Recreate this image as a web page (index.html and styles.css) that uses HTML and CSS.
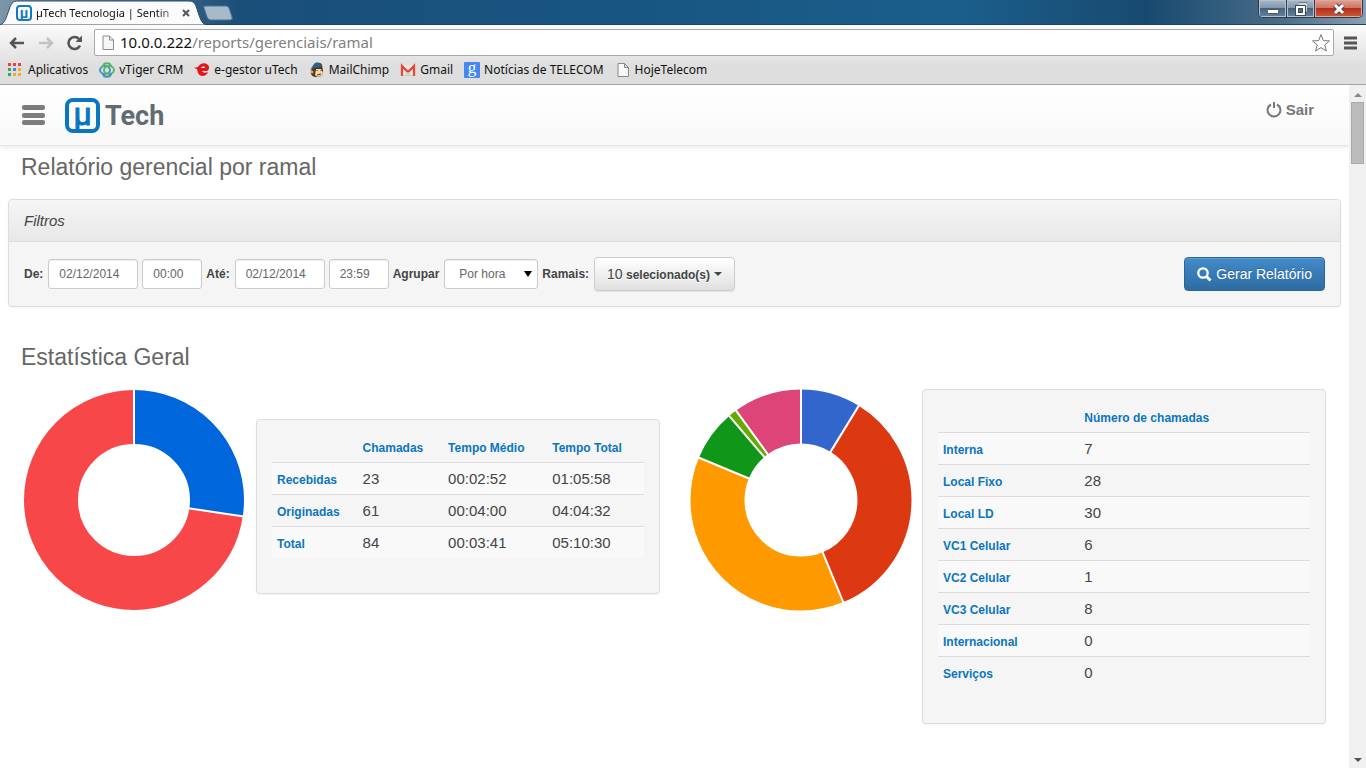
FILE: index.html
```html
<!DOCTYPE html>
<html lang="pt-BR">
<head>
<meta charset="utf-8">
<title>µTech Tecnologia | Sentinela</title>
<link rel="stylesheet" href="styles.css">
</head>
<body>
<div class="window">
  <div class="titlebar">
    <div class="tab">
      <svg class="tab-shape" viewBox="0 0 206 25" preserveAspectRatio="none" aria-hidden="true"><path d="M0 25 C5 23 6 18 9 10 C11 3 13 1 18 1 H188 C194 1 195 3 197 9 C200 18 201 23 206 25 Z" fill="#fbfbfb" stroke="#2d4d66" stroke-width="1"/></svg>
      <span class="favicon">µ</span>
      <span class="tab-title">µTech Tecnologia | Sentin</span>
      <button class="tab-close" type="button" aria-label="Fechar guia"><svg width="8" height="8" viewBox="0 0 8 8"><path d="M1 1 L7 7 M7 1 L1 7" stroke="#555" stroke-width="2"/></svg></button>
    </div>
    <button class="new-tab" type="button" aria-label="Nova guia"><svg width="32" height="16" viewBox="0 0 32 16"><path d="M3 1 H24 Q26 1 27 3 L30 12 Q31 15 28 15 H9 Q6 15 5 12 L2 3 Q1 1 3 1 Z" fill="#a6bac9" stroke="#4d7391"/></svg></button>
    <div class="window-controls">
      <button type="button" aria-label="Minimizar"><svg width="12" height="14" viewBox="0 0 12 14"><rect x="0.5" y="7.500" width="11" height="4" rx="1" fill="#fff" stroke="#4a5562"/></svg></button>
      <button type="button" aria-label="Restaurar"><svg width="12" height="14" viewBox="0 0 12 14"><path d="M4 2 H11 V9 H9" fill="none" stroke="#3f4b59" stroke-width="3"/><path d="M4 2 H11 V9 H9" fill="none" stroke="#fff" stroke-width="1.500"/><rect x="2" y="5" width="7" height="7" fill="none" stroke="#3f4b59" stroke-width="4"/><rect x="2" y="5" width="7" height="7" fill="none" stroke="#fff" stroke-width="2"/></svg></button>
      <button class="win-close" type="button" aria-label="Fechar"><svg width="14" height="14" viewBox="0 0 14 14"><path d="M3 3 L11 11 M11 3 L3 11" stroke="#5b4048" stroke-width="5"/><path d="M3 3 L11 11 M11 3 L3 11" stroke="#fff" stroke-width="3"/></svg></button>
    </div>
  </div>

  <div class="chrome">
    <div class="toolbar">
      <button type="button" aria-label="Voltar"><svg width="16" height="14" viewBox="0 0 16 14"><path d="M7 2 L2 7 L7 12 M2 7 H15" fill="none" stroke="#555" stroke-width="2.500"/></svg></button>
      <button type="button" aria-label="Avançar"><svg width="16" height="14" viewBox="0 0 16 14"><path d="M9 2 L14 7 L9 12 M14 7 H1" fill="none" stroke="#c3c3c3" stroke-width="2.500"/></svg></button>
      <button type="button" aria-label="Recarregar"><svg width="16" height="16" viewBox="0 0 16 16"><path d="M13 10.500 A6 6 0 1 1 12 4" fill="none" stroke="#555" stroke-width="2.600"/><path d="M15 0.500 V7 H8.500 Z" fill="#555"/></svg></button>
      <div class="omnibox">
        <svg width="12" height="15" viewBox="0 0 12 15" aria-hidden="true"><path d="M1 1 H7.500 L11.500 5 V14.500 H1 Z M7.500 1 V5 H11.500" fill="#f6f6f6" stroke="#8c8c8c"/></svg>
        <div class="url">10.0.0.222<span>/reports/gerenciais/ramal</span></div>
        <button type="button" aria-label="Adicionar aos favoritos"><svg width="20" height="20" viewBox="0 0 20 20"><path d="M10 1.500 L12.300 7.600 L18.500 7.900 L13.700 11.900 L15.400 18 L10 14.600 L4.600 18 L6.300 11.900 L1.500 7.900 L7.700 7.600 Z" fill="#fff" stroke="#777" stroke-linejoin="round"/></svg></button>
      </div>
      <button type="button" aria-label="Menu do navegador"><svg width="14" height="14" viewBox="0 0 14 14"><path d="M0 2 H13 M0 7 H13 M0 12 H13" stroke="#555" stroke-width="3"/></svg></button>
    </div>
    <nav class="bookmarks">
      <a href="#"><svg width="16" height="16" viewBox="0 0 16 16"><g fill="#ea4335"><path d="M0 1h3v3H0zM5 1h3v3H5zM10 1h3v3h-3z"/></g><g fill="#3aa757"><path d="M0 6h3v3H0zM0 11h3v3H0z"/></g><path d="M5 6h3v3H5z" fill="#4285f4"/><path d="M10 6h3v3h-3zM5 11h3v3H5zM10 11h3v3h-3z" fill="#f9ab1b"/></svg>Aplicativos</a>
      <a href="#"><svg width="16" height="16" viewBox="0 0 16 16" fill="none"><ellipse cx="6" cy="8" rx="5" ry="4" stroke="#3d9ac4" stroke-width="2"/><ellipse cx="10" cy="8" rx="5" ry="4" stroke="#58b868" stroke-width="2"/><path d="M4 5 C4 0 12 0 12 5" stroke="#58b868" stroke-width="2"/><path d="M4 11 C4 16 12 16 12 11" stroke="#3b8fc0" stroke-width="2"/></svg>vTiger CRM</a>
      <a href="#"><svg width="16" height="16" viewBox="0 0 16 16"><path d="M0 6 L4 5 C6 1 11 0 14 3 C16 5 15 8 13 9 L8 9 C9 11 11 11 14 10 C12 15 6 15 4 11 L3 7 Z" fill="#e5141b"/><path d="M7 6 C8 4 11 4 11 6 Z" fill="#fff"/></svg>e-gestor uTech</a>
      <a href="#"><svg width="16" height="16" viewBox="0 0 16 16"><path d="M3 7 L5 3 C8 0 12 0 13 3 L14 9 C14 14 11 15 8 15 C4 15 1 13 2 9 Z" fill="#52331e"/><path d="M7 7 H12 L14 11 C13 15 8 16 6 13 Z" fill="#f4d7a4"/><path d="M1 8 L5 2 C8 -1 13 1 12 5 L5 6 Z" fill="#2d6283"/><path d="M8 8 V9 M12 8 V9 M8 13 L12 12" stroke="#52331e"/><circle cx="3" cy="10" r="1.500" fill="#dba675"/></svg>MailChimp</a>
      <a href="#"><svg width="16" height="16" viewBox="0 0 16 16"><path d="M1 3 H15 V14 H1 Z" fill="#eee7df"/><path d="M2 14 V4 L8 10 L14 4 V14" fill="none" stroke="#de4b3c" stroke-width="2.300"/><path d="M3 14 L8 10 L13 14" fill="#d5cec3"/></svg>Gmail</a>
      <a href="#"><span class="google-icon">g</span>Notícias de TELECOM</a>
      <a href="#"><svg width="16" height="16" viewBox="0 0 16 16"><path d="M3 1.500 H9.500 L13.500 5.500 V14.500 H3 Z M9.500 1.500 V5.500 H13.500" fill="#f8f8f8" stroke="#888"/></svg>HojeTelecom</a>
    </nav>
  </div>

  <div class="viewport">
    <div class="page">
      <header class="header">
        <button class="menu" type="button" aria-label="Menu"><svg width="24" height="22" viewBox="0 0 24 22"><g fill="#7c7c7c"><rect x="1" y="1" width="23" height="5" rx="2"/><rect x="1" y="9" width="23" height="5" rx="2"/><rect x="1" y="16" width="23" height="5" rx="2"/></g></svg></button>
        <a class="brand" href="#"><span class="brand-mark">µ</span><span class="brand-name">Tech</span></a>
        <a class="logout" href="#"><svg width="16" height="16" viewBox="0 0 16 16"><path d="M5 2.500 A6.400 6.400 0 1 0 11 2.500 M8 0 V6" fill="none" stroke="#777" stroke-width="2"/></svg>Sair</a>
      </header>

      <main>
        <h1>Relatório gerencial por ramal</h1>
        <section class="panel filters">
          <div class="panel-heading">Filtros</div>
          <form class="filter-form">
            <label for="from-date">De:</label>
            <input class="date" id="from-date" type="text" value="02/12/2014">
            <input class="time" type="text" value="00:00" aria-label="Hora inicial">
            <label for="to-date">Até:</label>
            <input class="date" id="to-date" type="text" value="02/12/2014">
            <input class="time" type="text" value="23:59" aria-label="Hora final">
            <label for="group">Agrupar</label>
            <span class="select-wrap"><select id="group"><option>Por hora</option></select></span>
            <label for="ext">Ramais:</label>
            <button class="btn btn-default" id="ext" type="button"><span><span class="count">10</span> selecionado(s)</span><i class="caret"></i></button>
            <button class="btn btn-primary" type="button"><svg width="15" height="15" viewBox="0 0 15 15"><circle cx="6" cy="6" r="4.700" fill="none" stroke="#fff" stroke-width="2.300"/><path d="M9.500 9.500 L13.500 13.500" stroke="#fff" stroke-width="3"/></svg>Gerar Relatório</button>
          </form>
        </section>

        <h2>Estatística Geral</h2>
        <div class="stats">
          <section class="stat">
            <svg class="donut" viewBox="0 0 222 222" role="img" aria-label="Chamadas recebidas e originadas">
              <g fill="none" stroke-width="54" transform="rotate(-90 110 111)">
                <circle cx="110" cy="111" r="83" stroke="#f84749" pathLength="84" stroke-dasharray="61 23" stroke-dashoffset="-23"/>
                <circle cx="110" cy="111" r="83" stroke="#0066dc" pathLength="84" stroke-dasharray="23 61"/>
              </g>
              <g stroke="#fff" stroke-width="2">
                <path d="M110 0 V56"/>
                <path d="M110 0 V56" transform="rotate(98.570 110 111)"/>
              </g>
            </svg>
            <div class="panel table-panel offset">
              <table class="calls">
                <thead><tr><td></td><th scope="col">Chamadas</th><th scope="col">Tempo Médio</th><th scope="col">Tempo Total</th></tr></thead>
                <tbody>
                  <tr><th scope="row">Recebidas</th><td>23</td><td>00:02:52</td><td>01:05:58</td></tr>
                  <tr><th scope="row">Originadas</th><td>61</td><td>00:04:00</td><td>04:04:32</td></tr>
                  <tr><th scope="row">Total</th><td>84</td><td>00:03:41</td><td>05:10:30</td></tr>
                </tbody>
              </table>
            </div>
          </section>
          <section class="stat">
            <svg class="donut" viewBox="0 0 222 222" role="img" aria-label="Chamadas por tipo">
              <g fill="none" stroke-width="54" transform="rotate(-90 111 111)">
                <circle cx="111" cy="111" r="83.500" stroke="#3366cc" pathLength="80" stroke-dasharray="7 73"/>
                <circle cx="111" cy="111" r="83.500" stroke="#dc3912" pathLength="80" stroke-dasharray="28 52" stroke-dashoffset="-7"/>
                <circle cx="111" cy="111" r="83.500" stroke="#ff9900" pathLength="80" stroke-dasharray="30 50" stroke-dashoffset="-35"/>
                <circle cx="111" cy="111" r="83.500" stroke="#109618" pathLength="80" stroke-dasharray="6 74" stroke-dashoffset="-65"/>
                <circle cx="111" cy="111" r="83.500" stroke="#66aa00" pathLength="80" stroke-dasharray="1 79" stroke-dashoffset="-71"/>
                <circle cx="111" cy="111" r="83.500" stroke="#dd4477" pathLength="80" stroke-dasharray="8 72" stroke-dashoffset="-72"/>
              </g>
              <g stroke="#fff" stroke-width="2">
                <path d="M111 0 V56"/>
                <path d="M111 0 V56" transform="rotate(31.500 111 111)"/>
                <path d="M111 0 V56" transform="rotate(157.500 111 111)"/>
                <path d="M111 0 V56" transform="rotate(292.500 111 111)"/>
                <path d="M111 0 V56" transform="rotate(319.500 111 111)"/>
                <path d="M111 0 V56" transform="rotate(324 111 111)"/>
              </g>
            </svg>
            <div class="panel table-panel">
              <table class="types">
                <thead><tr><td></td><th scope="col">Número de chamadas</th></tr></thead>
                <tbody>
                  <tr><th scope="row">Interna</th><td>7</td></tr>
                  <tr><th scope="row">Local Fixo</th><td>28</td></tr>
                  <tr><th scope="row">Local LD</th><td>30</td></tr>
                  <tr><th scope="row">VC1 Celular</th><td>6</td></tr>
                  <tr><th scope="row">VC2 Celular</th><td>1</td></tr>
                  <tr><th scope="row">VC3 Celular</th><td>8</td></tr>
                  <tr><th scope="row">Internacional</th><td>0</td></tr>
                  <tr><th scope="row">Serviços</th><td>0</td></tr>
                </tbody>
              </table>
            </div>
          </section>
        </div>
      </main>
    </div>
    <div class="scrollbar" aria-hidden="true">
      <i class="arrow-up"></i>
      <i class="thumb"></i>
      <i class="arrow-down"></i>
    </div>
  </div>
</div>
</body>
</html>
```
FILE: styles.css
```css
* { box-sizing: border-box; }
body { margin: 0; font-family: "Liberation Sans", Arial, sans-serif; color: #444; background: #fff; }
button { border: 0; padding: 0; background: none; font: inherit; color: inherit; }
button svg { display: block; }
a { color: inherit; text-decoration: none; }

.window { display: flex; flex-direction: column; height: 100vh; overflow: hidden; }

/* title bar */
.titlebar { display: flex; align-items: flex-start; height: 25px; flex: none; background: linear-gradient(90deg, #7c95a8 0, #4a7291 120px, #1a4f7a 240px, #185581 45%, #1b5e8c 70%, #184a70 84%, #4a6d88 94%, #8aa0b2 100%); border-bottom: 1px solid #1c4363; }
.tab { position: relative; display: flex; align-items: center; width: 206px; height: 25px; padding: 0 16px; gap: 4px; font: 11px/16px "Noto Sans", sans-serif; color: #111; }
.tab > * { position: relative; }
.tab .tab-shape { position: absolute; top: 0; left: 0; width: 100%; height: 100%; }
.favicon { flex: none; width: 16px; height: 16px; border: 2px solid #1478be; border-radius: 4px; color: #1478be; font: bold 14px/12px Roboto, sans-serif; text-align: center; }
.tab-title { flex: 1; white-space: nowrap; -webkit-mask-image: linear-gradient(90deg, #000 85%, rgba(0, 0, 0, 0.3)); mask-image: linear-gradient(90deg, #000 85%, rgba(0, 0, 0, 0.3)); }
.new-tab { margin-top: 5px; margin-left: -4px; }
.window-controls { display: flex; height: 18px; margin-left: auto; margin-right: 3px; border: 1px solid #2b3b4b; border-top: 0; border-radius: 0 0 5px 5px; overflow: hidden; }
.window-controls button { display: flex; align-items: center; justify-content: center; width: 28px; background: linear-gradient(#a9b9c8 0, #8398ac 45%, #45617d 50%, #6484a0 100%); border-right: 1px solid #2b3b4b; box-shadow: inset 0 0 0 1px #b4c3d0; }
.window-controls .win-close { width: 47px; border: 0; background: linear-gradient(#dfa295 0, #cf7564 45%, #b3301a 50%, #cf5a3a 100%); box-shadow: inset 0 0 0 1px #e0a89c; }

/* browser toolbar */
.chrome { flex: none; background: linear-gradient(#fbfbfb, #dedede 70%); border-bottom: 1px solid #a3a3a3; font-family: "Noto Sans", sans-serif; color: #111; }
.toolbar { display: flex; align-items: center; gap: 13px; padding: 4px 8px 0 9px; }
.omnibox { display: flex; align-items: center; flex: 1; height: 27px; margin-left: -2px; margin-right: -3px; padding: 0 2px 0 7px; gap: 6px; background: #fff; border: 1px solid #a9a9a9; border-radius: 2px; font-size: 15px; line-height: 20px; }
.url { flex: 1; margin-bottom: 1px; white-space: nowrap; color: #111; }
.url span { color: #808080; }
.bookmarks { display: flex; align-items: center; height: 28px; padding: 0 8px; gap: 11px; font-size: 12px; line-height: 16px; }
.bookmarks a { display: flex; align-items: center; gap: 4px; white-space: nowrap; }
.google-icon { width: 16px; height: 16px; border-radius: 1px; background: #4787ee; color: #fff; font: 17px/12px "Liberation Serif", serif; text-align: center; }

/* page */
.viewport { display: flex; flex: 1; min-height: 0; }
.page { flex: 1; min-width: 0; overflow: hidden; }
.header { display: flex; align-items: center; height: 61px; padding: 0 35px 0 21px; background: linear-gradient(#fff, #f8f8f8); border-bottom: 1px solid #e6e6e6; box-shadow: 0 1px 5px rgba(0, 0, 0, 0.1); }
.brand { display: flex; align-items: center; gap: 5px; margin-left: 20px; }
.brand-mark { width: 35px; height: 35px; border: 4px solid #0a76bf; border-radius: 8px; color: #0a76bf; font: 32px/24px Roboto, sans-serif; -webkit-text-stroke: 1px #0a76bf; text-align: center; }
.brand-name { padding-top: 2px; color: #606c71; font: bold 27px/32px Roboto, sans-serif; }
.logout { display: flex; align-items: center; gap: 4px; margin: 0 0 11px auto; color: #777; font-size: 15px; font-weight: bold; }
main { padding: 0 8px; }
h1, h2 { margin: 0; padding-left: 13px; font-size: 23px; line-height: 26px; font-weight: normal; color: #666; }
h1 { margin: 8px 0 19px; }
h2 { margin: 37px 0 19px; }

.panel { border: 1px solid #ddd; border-radius: 4px; background: #f5f5f5; box-shadow: 0 1px 2px rgba(0, 0, 0, 0.05); }
.panel-heading { padding: 11px 15px 10px; border-bottom: 1px solid #ddd; border-radius: 3px 3px 0 0; background: linear-gradient(#f5f5f5, #e8e8e8); font-size: 15px; line-height: 20px; font-style: italic; }
.filter-form { display: flex; align-items: center; gap: 4px; padding: 15px; font-size: 12px; }
.filter-form label { padding-right: 1px; font-weight: bold; }
.filter-form input, .filter-form select { height: 30px; padding: 0 10px; border: 1px solid #ccc; border-radius: 3px; background: #fff; box-shadow: inset 0 1px 1px rgba(0, 0, 0, 0.075); font: 12px "Liberation Sans", Arial, sans-serif; color: #666; }
.filter-form .date { width: 90px; }
.filter-form .time { width: 60px; }
.select-wrap { position: relative; }
.select-wrap::after { content: ""; position: absolute; right: 6px; top: 12px; border: 4px solid transparent; border-top: 6px solid #000; border-bottom: 0; }
.filter-form select { display: block; width: 94px; padding-left: 14px; appearance: none; }
.btn { display: flex; align-items: center; gap: 4px; height: 34px; padding: 0 12px; border: 1px solid #ccc; border-radius: 4px; white-space: nowrap; }
.btn-default { background: linear-gradient(#fff, #e0e0e0); font-weight: bold; text-shadow: 0 1px 0 #fff; box-shadow: 0 1px 1px rgba(0, 0, 0, 0.075); }
.count { font-size: 14px; font-weight: normal; }
.caret { border: 4px solid transparent; border-top-color: #444; border-bottom: 0; }
.btn-primary { margin-left: auto; border-color: #2b669a; background: linear-gradient(#428bca, #2d6ca2); color: #fff; font-size: 14px; text-shadow: 0 -1px 0 rgba(0, 0, 0, 0.2); box-shadow: inset 0 1px 0 rgba(255, 255, 255, 0.15); }

.stats { display: grid; grid-template-columns: 1fr 1fr; gap: 30px; padding: 0 15px 0 16px; align-items: start; }
.stat { display: flex; align-items: flex-start; gap: 10px; }
.donut { flex: none; width: 222px; height: 222px; }
.table-panel { flex: 1; padding: 15px 15px 35px; }
.offset { margin-top: 30px; }
table { width: 100%; table-layout: fixed; border-collapse: separate; border-spacing: 0; font-size: 15px; line-height: 20px; }
th, td { padding: 5px; text-align: left; vertical-align: baseline; }
th { color: #0a76bf; font-size: 12px; }
thead th, thead td { padding: 3px 5px 4px; }
tbody th, tbody td { padding: 6px 5px 5px; border-top: 1px solid #ddd; }
tbody th { line-height: 18px; }
tbody tr:nth-child(odd) { background: #f9f9f9; }
.calls td:first-child { width: 23%; }
.calls th:nth-child(2) { width: 23%; }
.calls th:nth-child(3) { width: 28%; }
.types thead td { width: 38%; }

.scrollbar { display: flex; flex-direction: column; align-items: center; flex: none; width: 17px; padding: 8px 0 6px; background: #f0f0f0; }
.arrow-up { border: 4px solid transparent; border-top: 0; border-bottom-color: #888; }
.thumb { width: 13px; height: 62px; margin-top: 5px; background: #bcbcbc; border: 1px solid #a8a8a8; }
.arrow-down { margin-top: auto; border: 4px solid transparent; border-bottom: 0; border-top-color: #505050; }
```
